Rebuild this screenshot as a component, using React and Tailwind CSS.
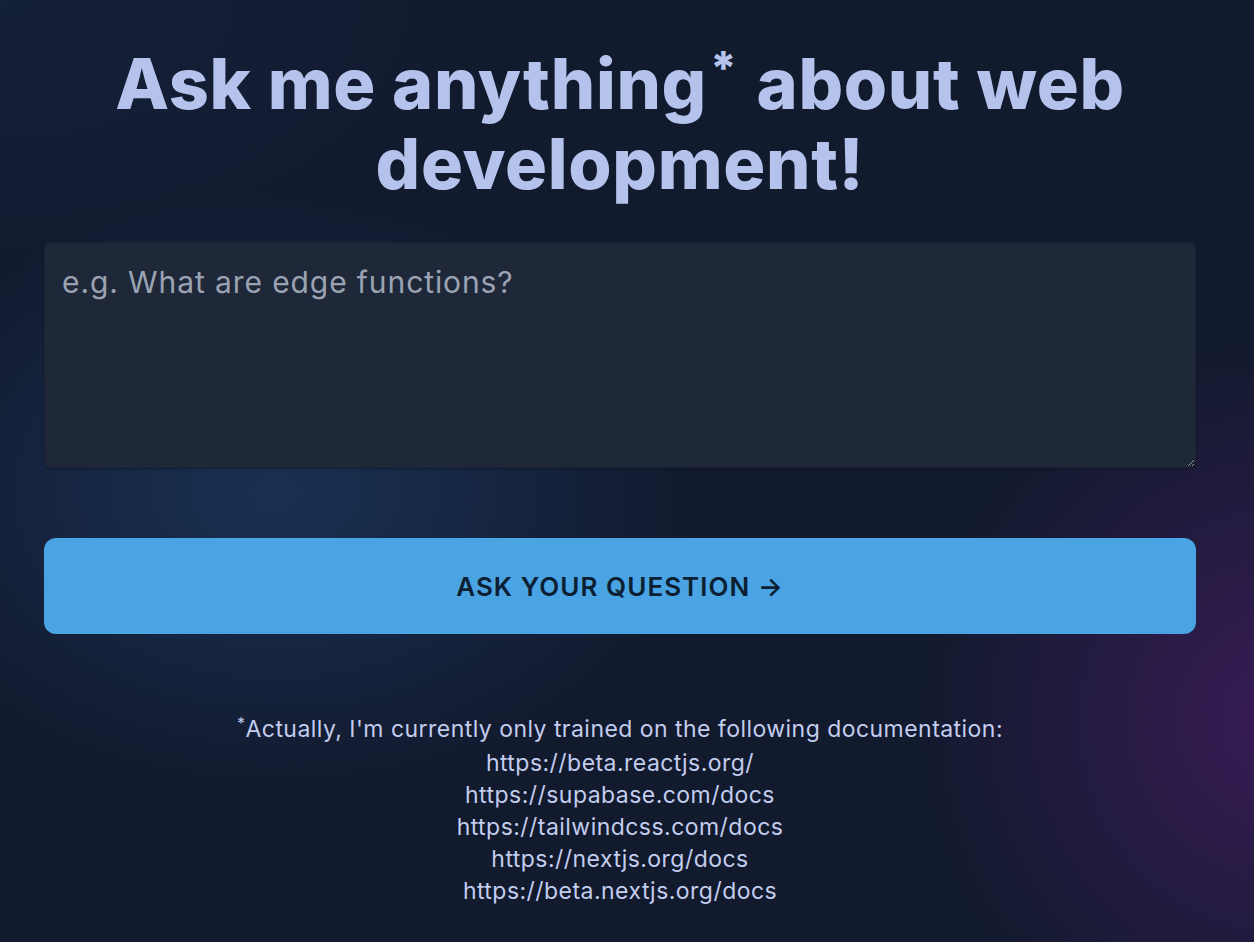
export default function App() {
  const links = [
    "https://beta.reactjs.org/",
    "https://supabase.com/docs",
    "https://tailwindcss.com/docs",
    "https://nextjs.org/docs",
    "https://beta.nextjs.org/docs",
  ];
  return (
    <div
      className="min-h-[942px] w-full bg-[#121a2e] bg-[radial-gradient(ellipse_420px_300px_at_22%_52%,rgba(28,56,96,0.75),transparent_100%),radial-gradient(ellipse_360px_380px_at_102%_76%,rgba(62,28,92,0.85),transparent_100%),radial-gradient(ellipse_500px_300px_at_0%_0%,rgba(22,36,64,0.6),transparent_100%)]"
      style={{ fontFamily: "Inter, 'Noto Sans', sans-serif" }}
    >
      <div className="pl-[44px] pr-[58px] pt-[44px] pb-[40px] flex flex-col">
        <h1 className="text-center text-[70px] leading-[80px] font-extrabold tracking-[0.01em] text-[#b5c3ec]">
          Ask me anything
          <span className="text-[46px] relative top-[-24px] leading-none ml-[3px] mr-[3px]">*</span> about web
          <br />
          development!
        </h1>
        <textarea
          placeholder="e.g. What are edge functions?"
          className="mt-[38px] h-[226px] w-full resize-y rounded-md bg-[#1f2839] border border-[#1a2233] shadow-[0_1px_2px_rgba(0,0,0,0.3)] px-[17px] py-[19px] text-[30px] leading-[40px] tracking-[0.03em] text-[#d1d5db] placeholder:text-[#9ba3b3] outline-none"
          style={{ fontFamily: "Inter, 'Noto Sans', sans-serif" }}
        />
        <button className="mt-[70px] h-[96px] w-full rounded-[12px] bg-[#4aa3e3] text-[26px] font-semibold text-[#0c1f33] tracking-[0.04em]">
          ASK YOUR QUESTION →
        </button>
        <div className="mt-[79px] text-center text-[23px] leading-[32px] tracking-[0.02em] text-[#c3cdef]">
          <p>
            <span className="text-[16px] relative top-[-8px]">*</span>
            Actually, I'm currently only trained on the following documentation:
          </p>
          {links.map((l) => (
            <p key={l}>{l}</p>
          ))}
        </div>
      </div>
    </div>
  );
}
